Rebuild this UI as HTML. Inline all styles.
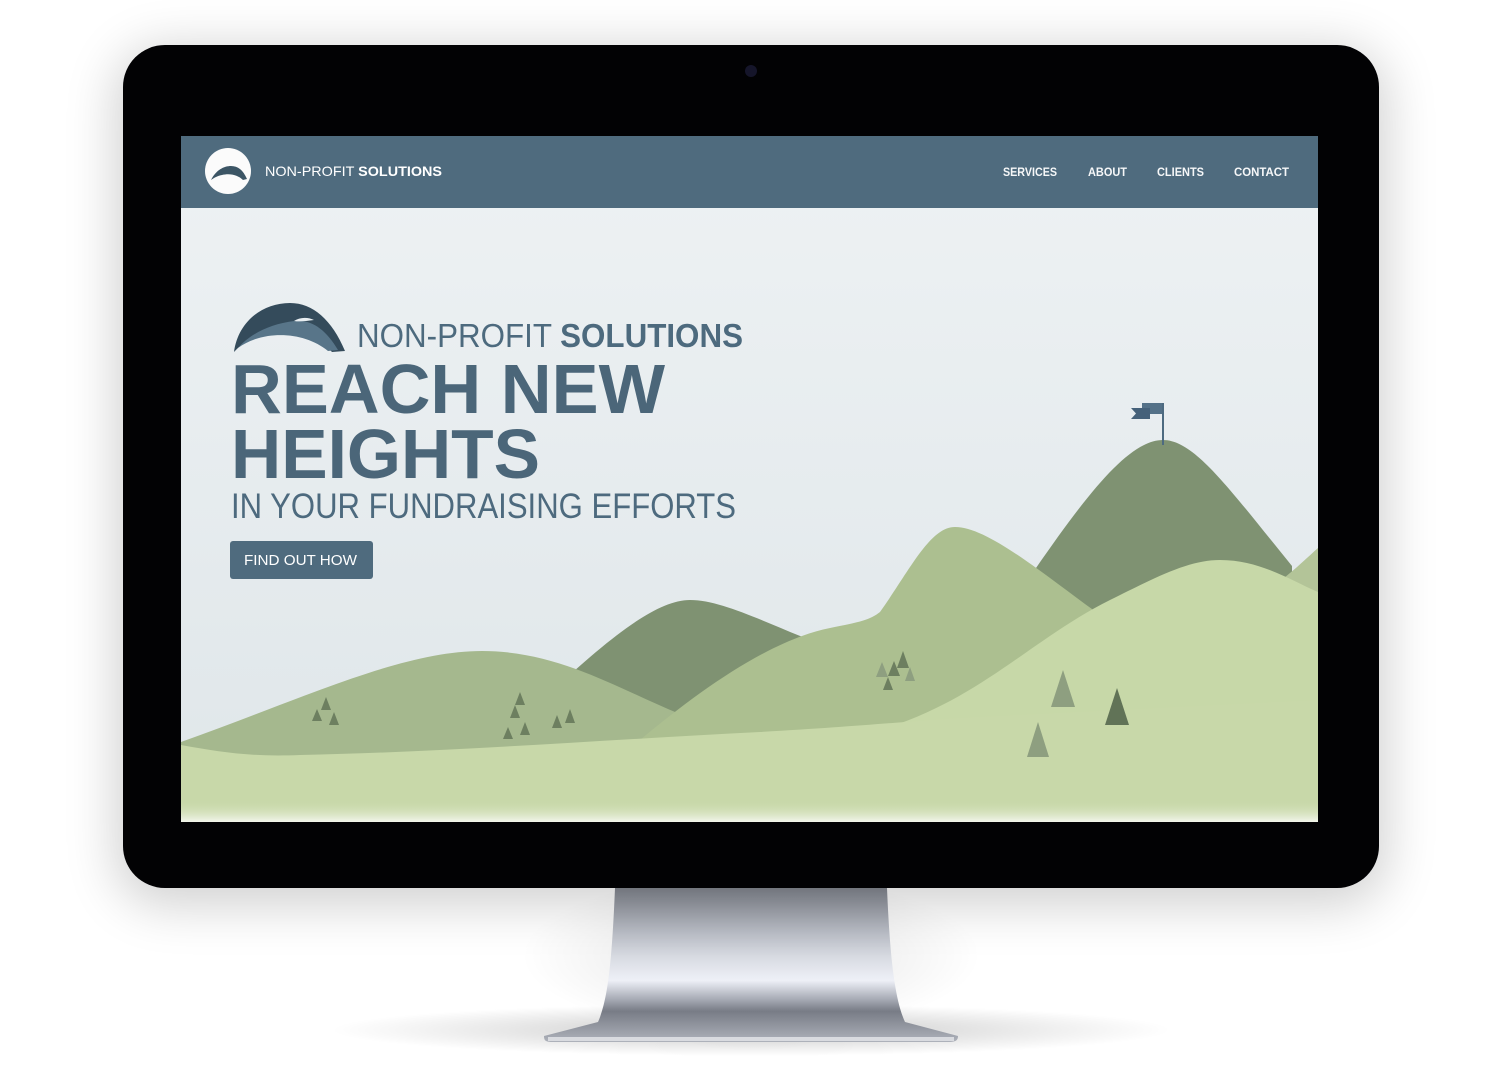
<!DOCTYPE html>
<html><head><meta charset="utf-8"><style>
html,body{margin:0;padding:0;background:#fff;}
body{width:1500px;height:1085px;position:relative;overflow:hidden;font-family:"Liberation Sans",sans-serif;}
.monitor{position:absolute;left:123px;top:45px;width:1256px;height:843px;background:#020204;border-radius:42px;box-shadow:0 10px 50px 8px rgba(0,0,0,0.18);}
.cam{position:absolute;left:745px;top:65px;width:12px;height:12px;border-radius:50%;background:#15152a;}
svg{position:absolute;left:0;top:0;}
</style></head><body>
<svg width="1500" height="1085" viewBox="0 0 1500 1085">
<defs>
<linearGradient id="stand" x1="0" y1="0" x2="0" y2="1">
<stop offset="0" stop-color="#858992"/><stop offset="0.25" stop-color="#b3b7c0"/><stop offset="0.45" stop-color="#d8dbe2"/><stop offset="0.6" stop-color="#eef0f7"/><stop offset="0.72" stop-color="#a8acb6"/><stop offset="0.8" stop-color="#787c86"/><stop offset="1" stop-color="#aeb2bb"/>
</linearGradient>
<radialGradient id="floor" cx="0.5" cy="0.5" r="0.5"><stop offset="0" stop-color="#000" stop-opacity="0.22"/><stop offset="1" stop-color="#000" stop-opacity="0"/></radialGradient>
<radialGradient id="sside" cx="0.5" cy="0.5" r="0.5"><stop offset="0" stop-color="#000" stop-opacity="0.12"/><stop offset="1" stop-color="#000" stop-opacity="0"/></radialGradient>
<linearGradient id="sky" x1="0" y1="0" x2="0" y2="1"><stop offset="0" stop-color="#eef2f4"/><stop offset="1" stop-color="#dfe6e9"/></linearGradient>
<linearGradient id="fg" x1="0" y1="0" x2="0" y2="1"><stop offset="0" stop-color="#c8d8a9" stop-opacity="0"/><stop offset="1" stop-color="#f3f6ec"/></linearGradient>
</defs>
<ellipse cx="751" cy="1030" rx="420" ry="26" fill="url(#floor)"/>
<ellipse cx="751" cy="955" rx="230" ry="80" fill="url(#sside)"/>
<path d="M615,888 L887,888 C890,960 895,1000 905,1022 L958,1036 C958,1041 955,1042 948,1042 L553,1042 C546,1042 544,1041 544,1036 L598,1022 C608,1000 612,960 615,888Z" fill="url(#stand)"/>
<rect x="548" y="1037" width="406" height="4" fill="#d9dbe0"/>
</svg>
<div class="monitor"></div>
<div class="cam"></div>
<svg width="1500" height="1085" viewBox="0 0 1500 1085">
<rect x="181" y="136" width="1137" height="686" fill="url(#sky)"/>
<path d="M573,672 C620,630 660,600 690,600 C720,600 760,620 810,640 L810,720 L573,720Z" fill="#7f9272"/>
<path d="M1036,568 C1090,490 1130,440 1163,440 C1195,440 1230,490 1292,566 L1292,700 L1036,700Z" fill="#7f9272"/>
<path d="M1284,578 C1300,565 1310,555 1318,548 L1318,640 L1284,640Z" fill="#b3c498"/>
<path d="M181,742 C300,700 400,651 482,651 C560,651 620,690 680,714 L680,760 L181,760Z" fill="#a5b88e"/>
<path d="M640,740 C700,690 770,640 830,628 C860,622 870,620 880,612 C910,570 930,527 955,527 C990,527 1050,580 1110,622 L1160,700 L640,760Z" fill="#acbf90"/>
<path d="M880,730 C980,700 1030,640 1110,600 C1160,575 1190,560 1220,560 C1260,560 1290,580 1318,592 L1318,822 L880,822Z" fill="#c7d8a8"/>
<path d="M181,745 C220,752 250,757 300,755 C450,752 600,740 760,732 C850,727 900,722 960,718 L1318,700 L1318,822 L181,822Z" fill="#c8d8a9"/>
<rect x="181" y="800" width="1137" height="22" fill="url(#fg)"/>
<g fill="#6d7f60">
<path d="M321,710 l5,-13 l5,13z"/><path d="M312,721 l5,-12 l5,12z"/><path d="M329,725 l5,-13 l5,13z"/>
<path d="M515,705 l5,-13 l5,13z"/><path d="M510,718 l5,-13 l5,13z"/><path d="M503,739 l5,-12 l5,12z"/><path d="M520,735 l5,-13 l5,13z"/><path d="M552,728 l5,-13 l5,13z"/><path d="M565,723 l5,-14 l5,14z"/>
<path d="M897,668 l6,-17 l6,17z"/><path d="M883,690 l5,-13 l5,13z"/><path d="M888,676 l6,-15 l6,15z"/>
<path d="M1105,725 l12,-37 l12,37z" fill="#617357"/>
</g>
<g fill="#8e9f80"><path d="M876,677 l6,-15 l6,15z"/><path d="M905,681 l5,-14 l5,14z"/><path d="M1051,707 l12,-37 l12,37z"/><path d="M1027,757 l11,-35 l11,35z"/></g>
<rect x="1162" y="403" width="2" height="42" fill="#4d6a80"/>
<path d="M1142,403 L1162,403 L1162,414 L1142,414Z" fill="#547188"/>
<path d="M1131,408 L1150,408 L1150,419 L1131,419 L1136,413.5Z" fill="#45617a"/>
<rect x="181" y="136" width="1137" height="72" fill="#4f6b7e"/>
<circle cx="228" cy="171" r="23" fill="#fbfbfb"/>
<path d="M211,180 C216,170 224,166 231,166 C238,166 243,170 247,179 L243,180 C238,175 230,173 222,175 C217,176 214,178 211,180Z" fill="#3c5565"/>
<text x="265" y="176" font-size="14" fill="#fff" textLength="177" lengthAdjust="spacingAndGlyphs">NON-PROFIT <tspan font-weight="bold">SOLUTIONS</tspan></text>
<g font-size="12" fill="#fff" font-weight="bold" opacity="0.95">
<text x="1003" y="176" textLength="54" lengthAdjust="spacingAndGlyphs">SERVICES</text>
<text x="1088" y="176" textLength="39" lengthAdjust="spacingAndGlyphs">ABOUT</text>
<text x="1157" y="176" textLength="47" lengthAdjust="spacingAndGlyphs">CLIENTS</text>
<text x="1234" y="176" textLength="55" lengthAdjust="spacingAndGlyphs">CONTACT</text>
</g>
<path d="M234,352 C238,322 262,303 290,303 C313,303 332,320 345,351 L332,352 C318,336 296,329 272,332 C255,335 243,342 234,352Z" fill="#344b5b"/>
<path d="M238,348 C250,334 270,324 294,321 C312,319 326,330 338,350 L328,351 C312,338 290,333 268,336 C256,338 246,342 238,348Z" fill="#587589"/>
<path d="M294,321 C300,317 308,317 314,320 C306,321 300,322 294,321Z" fill="#e9eef1"/>
<text x="357" y="347" font-size="33" fill="#4d6a7e" textLength="386" lengthAdjust="spacingAndGlyphs">NON-PROFIT <tspan font-weight="bold">SOLUTIONS</tspan></text>
<text x="231" y="413" font-size="70" font-weight="bold" fill="#4b6679" textLength="434" lengthAdjust="spacingAndGlyphs">REACH NEW</text>
<text x="231" y="478" font-size="70" font-weight="bold" fill="#4b6679" textLength="309" lengthAdjust="spacingAndGlyphs">HEIGHTS</text>
<text x="231" y="518" font-size="35" fill="#4d6a7e" textLength="505" lengthAdjust="spacingAndGlyphs">IN YOUR FUNDRAISING EFFORTS</text>
<rect x="230" y="541" width="143" height="38" rx="3" fill="#4f6b7e"/>
<text x="244" y="565" font-size="15" fill="#fff" textLength="113" lengthAdjust="spacingAndGlyphs">FIND OUT HOW</text>
</svg>
</body></html>
